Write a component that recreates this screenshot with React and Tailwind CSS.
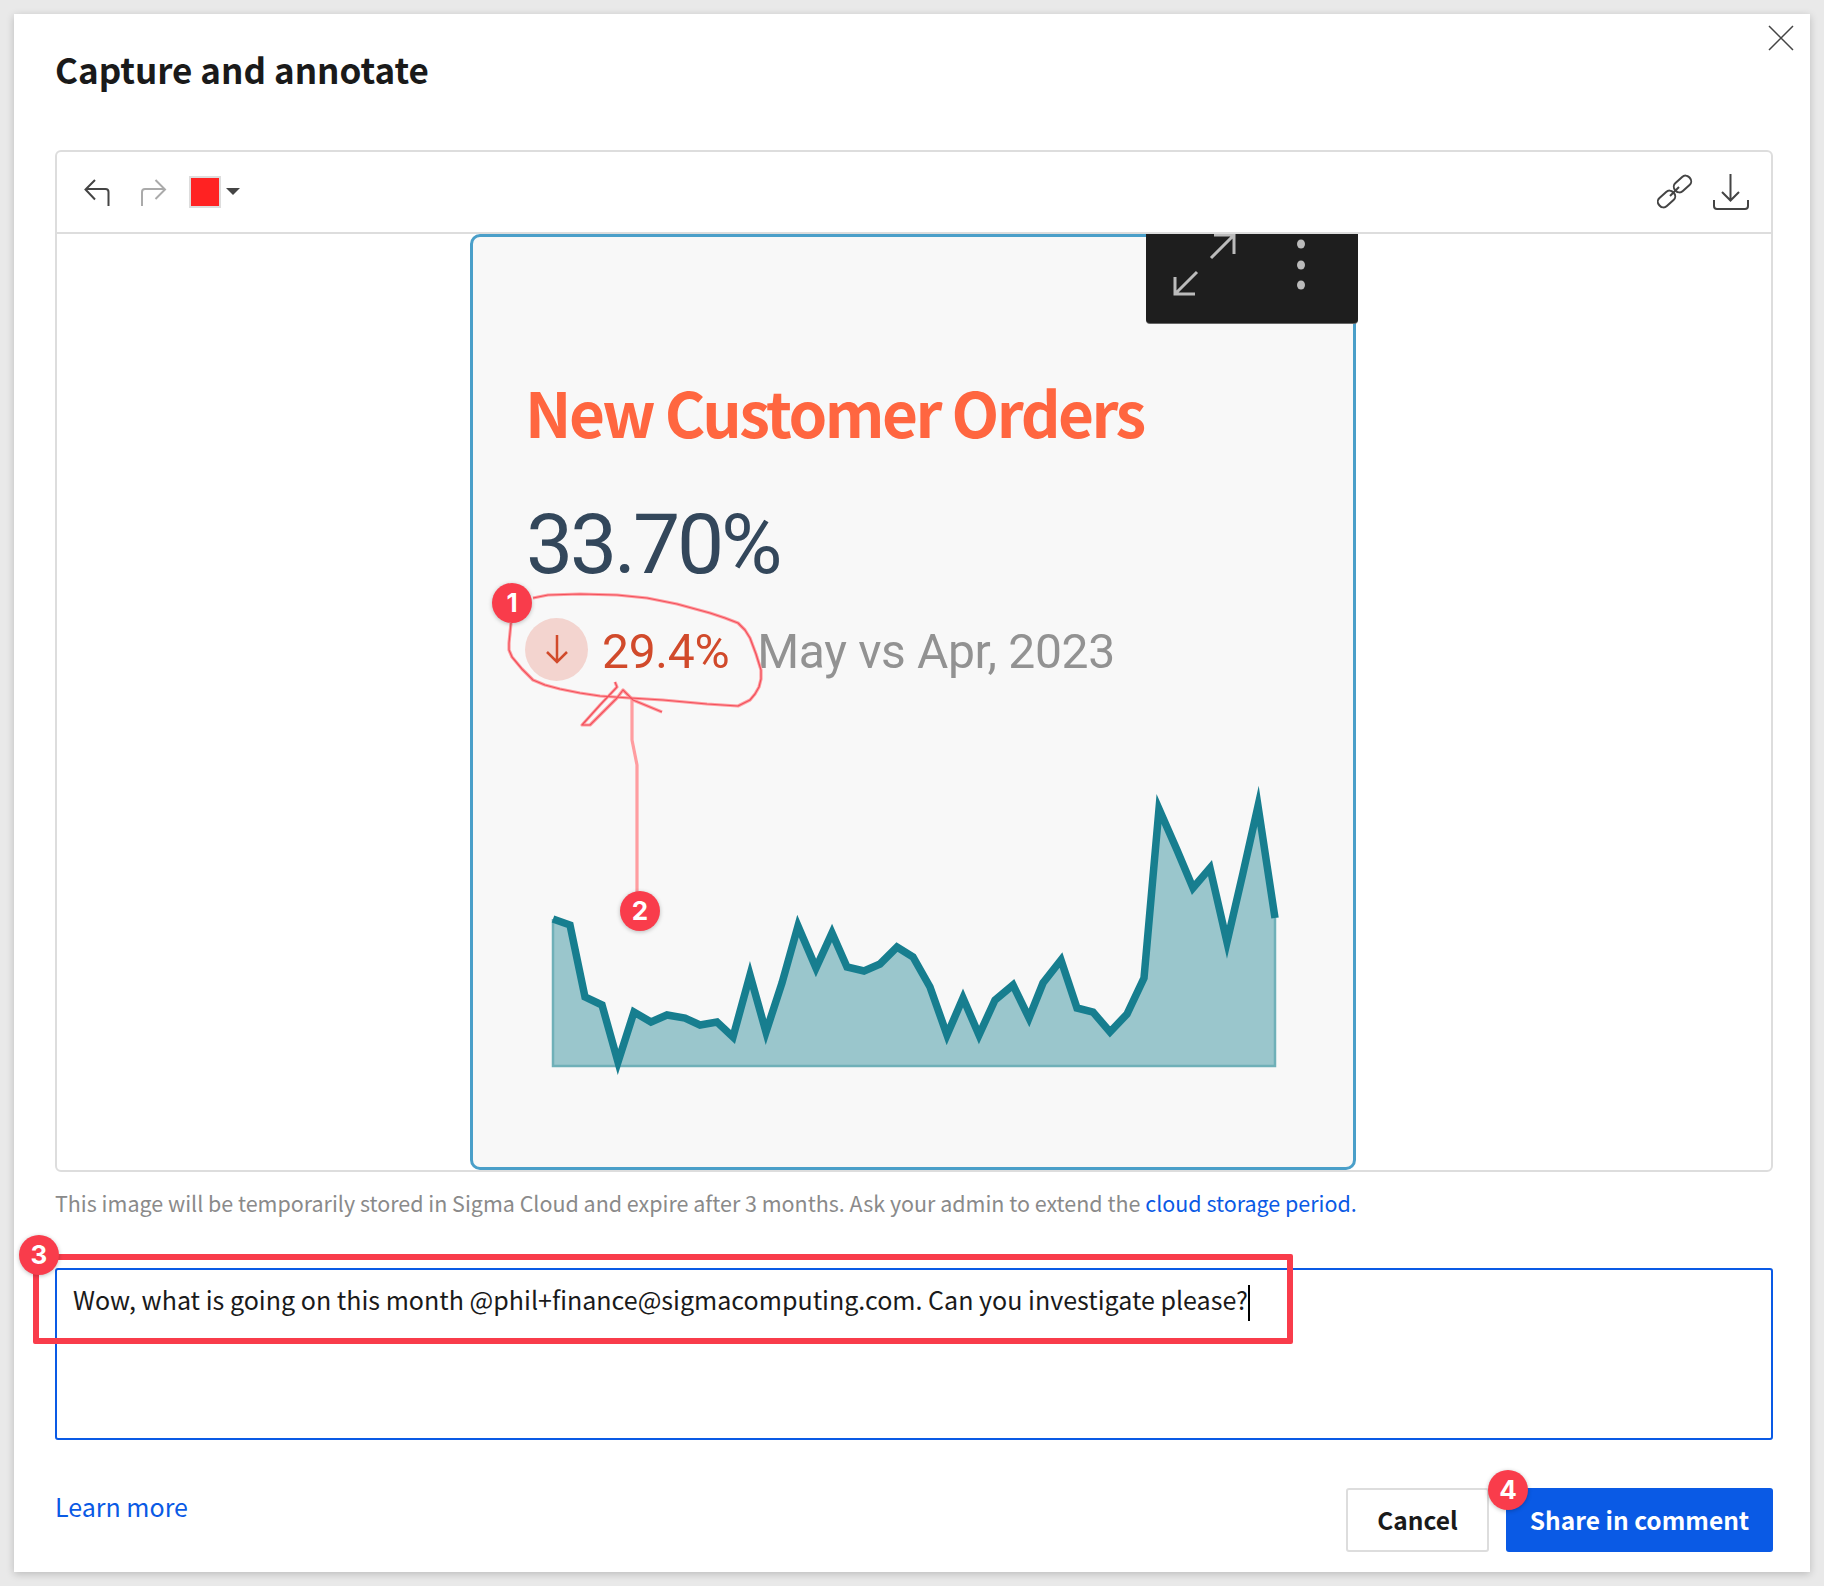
const sans = "font-['Noto_Sans_CJK_SC','Noto_Sans',sans-serif]";

const chartPoints = [
  [553, 919], [570, 925], [585, 997], [602, 1005], [618, 1062], [634, 1012], [651, 1022], [667, 1015],
  [685, 1018], [700, 1025], [717, 1022], [733, 1037], [750, 975], [766, 1032], [782, 983], [798, 926],
  [816, 968], [832, 933], [847, 967], [864, 971], [880, 964], [897, 947], [913, 957], [930, 987],
  [947, 1035], [963, 998], [979, 1035], [995, 1000], [1013, 985], [1029, 1018], [1043, 983], [1061, 960],
  [1077, 1008], [1093, 1012], [1110, 1032], [1127, 1014], [1144, 978], [1159, 809], [1177, 850], [1193, 888],
  [1210, 868], [1227, 942], [1243, 873], [1258, 806], [1275, 918],
];
const line = chartPoints.map((p) => p.join(',')).join(' ');

// hand drawn annotation, traced point by point
const loop = 'M533 598L548 595 580 594 617 595 647 598 677 604 710 613 725 618 738 623 745 630 750 638 756 654 761 670 761 679 759 687 755 694 750 700 738 706 707 704 663 700 630 698 600 696 580 693 560 689 545 685 533 680 522 669 512 657 509 650 509 643 511 623';
const arrow = 'M637 892V765L634 750 632 740V700';
const head = 'M662 712L633 700 623 690 617 698 590 725 582 725 600 705 617 687 615 682';

function Badge({ n, className }) {
  return (
    <div className={`absolute z-20 flex h-10 w-10 items-center justify-center rounded-full bg-[#f93c4b] font-['Inter',sans-serif] text-[26px] leading-none font-bold text-white shadow-[0_1px_4px_rgba(0,0,0,0.25)] ${className}`}>
      {n}
    </div>
  );
}

function Toolbar() {
  return (
    <div className="flex h-[82px] items-start border-b-2 border-[#dddddd]">
      <svg width="26" height="28" viewBox="84 179 26 28" fill="none" stroke="#444444" strokeWidth="2" className="mt-[27px] ml-[27px]">
        <path d="M108.5 206V192q0-3-3-3H85.5M95 180l-9.5 9.500L95 199.500" />
      </svg>
      <svg width="26" height="28" viewBox="141 179 26 28" fill="none" stroke="#aaaaaa" strokeWidth="2" className="mt-[27px] ml-[31px]">
        <path d="M142 206V192q0-3 3-3h20M155.500 180l9.500 9.500-9.500 9.500" />
      </svg>
      <div className="mt-[24px] ml-[22px] h-[32px] w-[32px] border-2 border-[#dddddd] bg-[#ff2222]" />
      <svg width="14" height="7" viewBox="0 0 14 7" className="mt-[36px] ml-[5px]">
        <path d="M0 0h14L7 7z" fill="#444444" />
      </svg>
      <svg width="36" height="36" viewBox="0 0 36 36" fill="none" stroke="#444444" strokeWidth="2" className="mt-[22px] ml-auto">
        <rect x="-9.500" y="-5.500" width="19" height="11" rx="5" transform="translate(9.500 25) rotate(-42)" />
        <rect x="-9.500" y="-5.500" width="19" height="11" rx="5" transform="translate(25.500 10) rotate(-42)" />
        <path d="M13 22L22 13" />
      </svg>
      <svg width="38" height="38" viewBox="1712 173 38 38" fill="none" stroke="#444444" strokeWidth="2" className="mt-[21px] mr-[21px] ml-[19px]">
        <path d="M1730.500 174v26M1722 192l8.500 8.500 8.500-8.500M1714 200v6q0 3 3 3h28q3 0 3-3v-6" />
      </svg>
    </div>
  );
}

function Card() {
  return (
    <div className="relative ml-[413px] h-[936px] w-[886px] rounded-[10px] border-[3px] border-[#4a9fc9] bg-[#f8f8f8]">
      <div className="blur-[0.5px]">
        <div className={`pt-[134px] pl-[52px] ${sans} text-[62px] leading-[80px] font-semibold tracking-[-2.5px] text-[#ff6640]`}>
          New Customer Orders
        </div>
        <div className="mt-[49px] pl-[53px] font-['Roboto',sans-serif] text-[84px] leading-[90px] tracking-[-3.2px] text-[#33475b]">33.70%</div>
        <div className="mt-[25px] flex items-center pl-[52px] font-['Roboto',sans-serif] text-[48px] leading-[62px]">
          <span className="flex h-[63px] w-[63px] items-center justify-center rounded-full bg-[#f3d4cf]">
            <svg width="24" height="32" viewBox="0 0 24 32" fill="none" stroke="#d14a2b" strokeWidth="2.500">
              <path d="M12 2v27M2 19l10 10 10-10" />
            </svg>
          </span>
          <span className="mt-[6px] ml-[14px] tracking-[-0.3px] text-[#d14a2b]">29.4%</span>
          <span className="mt-[6px] ml-[28px] tracking-[-0.35px] text-[#929292]">May vs Apr, 2023</span>
        </div>
      </div>

      <svg width="886" height="936" viewBox="470 234 886 936" className="absolute -top-[3px] -left-[3px]" fill="none">
        <g className="blur-[0.4px]">
          <polygon points={`553,919 ${line} 1275,1066 553,1066`} fill="#9ac6cc" />
          <path d="M553 919V1066H1275V918" stroke="#6fb0b8" strokeWidth="2.500" />
          <polyline points={line} stroke="#177e8f" strokeWidth="7.500" strokeMiterlimit="10" />
        </g>
        <g stroke="#ff9da0" strokeWidth="3.200" strokeLinejoin="round">
          <path d={loop} />
          <path d={arrow} />
          <path d={head} />
        </g>
        <g stroke="#f2505c" strokeWidth="1.200" strokeLinejoin="round">
          <path d={loop} />
          <path d={head} />
        </g>
      </svg>

      <div className="absolute -top-[3px] -right-[5px] h-[89px] w-[212px] rounded-b-[4px] bg-[#1e1e1e] shadow-[0_1px_0_#666666]">
        <svg width="212" height="89" viewBox="1146 234 212 89" fill="none" stroke="#bbbbbb" strokeWidth="3">
          <path d="M1197 272L1175 294M1175 277V294H1195" />
          <path d="M1211 258L1234 235M1214 235H1234V254" />
          <g fill="#bbbbbb" stroke="none">
            <ellipse cx="1301" cy="244" rx="4" ry="4.500" />
            <ellipse cx="1301" cy="265" rx="4" ry="4.500" />
            <ellipse cx="1301" cy="285" rx="4" ry="4.500" />
          </g>
        </svg>
      </div>
    </div>
  );
}

export default function App() {
  return (
    <div className={`h-[1586px] overflow-hidden bg-[#e9e9e9] p-[14px] ${sans}`}>
      <div className="relative h-[1558px] w-[1796px] bg-white px-[41px] shadow-[0_2px_8px_rgba(0,0,0,0.2)]">
        <svg width="26" height="26" viewBox="0 0 26 26" fill="none" stroke="#444444" strokeWidth="1.500" className="absolute top-[11px] right-[16px]">
          <path d="M1 1l24 24M25 1L1 25" />
        </svg>

        <div className="h-[136px] pt-[35px] text-[35px] leading-[40px] font-semibold text-[#1a1a1a]">Capture and annotate</div>

        <div className="h-[1022px] w-[1718px] rounded-[6px] border-2 border-[#dddddd]">
          <Toolbar />
          <Card />
        </div>

        <p className="mt-[16px] text-[21.46px] leading-[30px] text-[#8a8a8a]">
          This image will be temporarily stored in Sigma Cloud and expire after 3 months. Ask your admin to extend the{' '}
          <span className="text-[#0a5ae5]">cloud storage period.</span>
        </p>

        <div className="mt-[50px] h-[172px] w-[1718px] rounded-[3px] border-2 border-[#0a5ae5] pt-[9px] pl-[16px] text-[25.05px] leading-[40px] text-[#1a1a1a]">
          Wow, what is going on this month @phil+finance@sigmacomputing.com. Can you investigate please?
          <span className="inline-block h-[36px] w-[2px] bg-black align-middle" />
        </div>

        <div className="mt-[48px] flex w-[1718px] items-start">
          <span className="text-[25px] leading-[36px] text-[#0a5ae5]">Learn more</span>
          <button className="ml-auto h-16 w-[143px] rounded-[3px] border-2 border-[#dddddd] text-[24.5px] font-semibold text-[#1a1a1a]">Cancel</button>
          <button className="ml-[17px] h-16 w-[267px] rounded-[3px] bg-[#0a5ae5] text-[24.5px] font-semibold text-white">Share in comment</button>
        </div>

        <div className="absolute top-[1240px] left-[19px] z-10 h-[90px] w-[1260px] rounded-[2px] border-[6px] border-[#f93c4b]" />
        <Badge n="1" className="top-[569px] left-[478px]" />
        <Badge n="2" className="top-[877px] left-[606px]" />
        <Badge n="3" className="top-[1221px] left-[5px]" />
        <Badge n="4" className="top-[1456px] left-[1474px]" />
      </div>
    </div>
  );
}
